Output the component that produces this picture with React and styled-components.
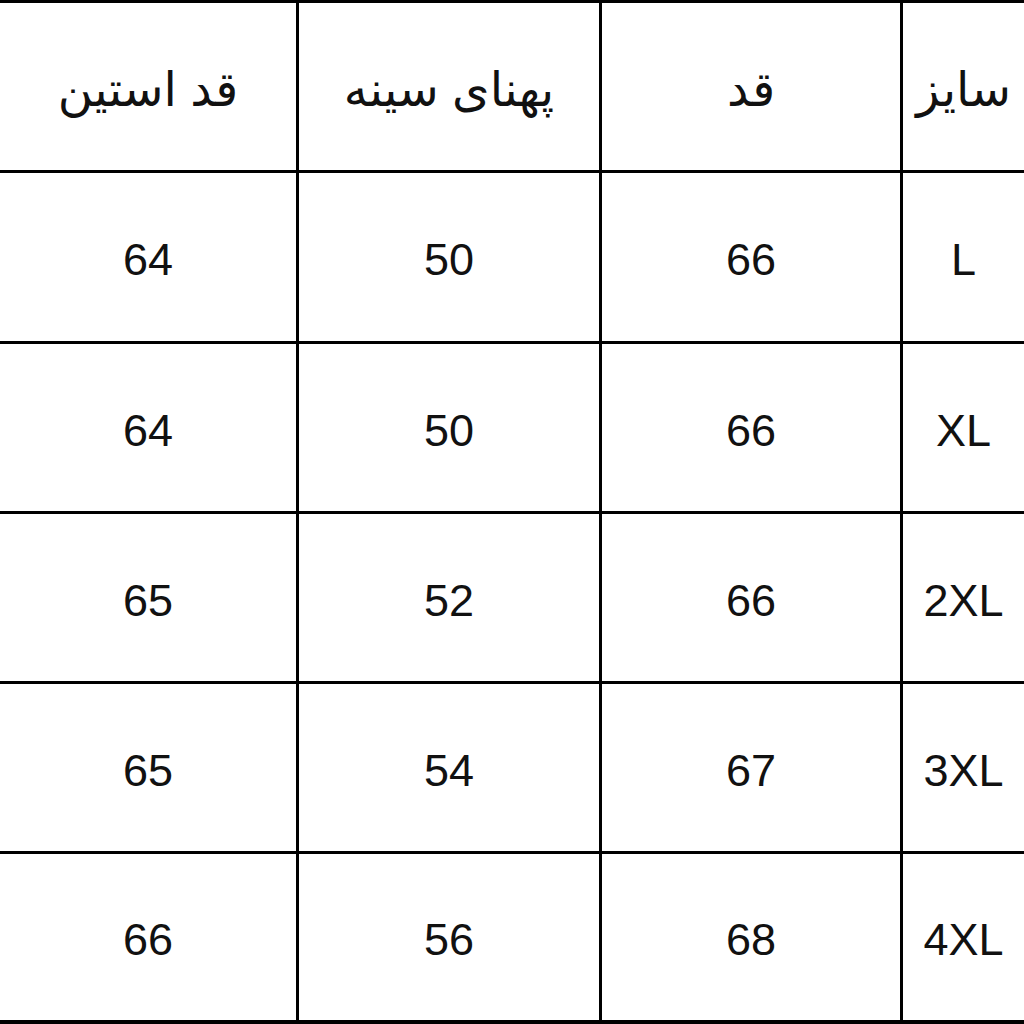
import React from "react";
import styled, { createGlobalStyle } from "styled-components";

const Global = createGlobalStyle`
  html, body { margin: 0; padding: 0; background: #ffffff; }
  body { width: 1024px; height: 1024px; overflow: hidden; }
`;

const Table = styled.div`
  direction: rtl;
  width: 1024px;
  height: 1024px;
  box-sizing: border-box;
  background: #000000;
  border-top: 3px solid #000000;
  border-bottom: 4px solid #000000;
  display: grid;
  grid-template-columns: 121px 298px 300px 296px;
  grid-template-rows: 167px 168px 167px 167px 167px 166px;
  column-gap: 3px;
  row-gap: 3px;
`;

const Cell = styled.div`
  background: #ffffff;
  display: flex;
  align-items: center;
  justify-content: center;
  color: #111111;
  font-family: "Liberation Sans", "DejaVu Sans", sans-serif;
  font-size: ${(p) => (p.$head ? "48px" : "45px")};
  padding-top: ${(p) => (p.$head ? "4px" : "6px")};
  box-sizing: border-box;
  white-space: nowrap;
`;

const headers = ["سایز", "قد", "پهنای سینه", "قد استین"];
const rows = [
  ["L", "66", "50", "64"],
  ["XL", "66", "50", "64"],
  ["2XL", "66", "52", "65"],
  ["3XL", "67", "54", "65"],
  ["4XL", "68", "56", "66"],
];

export default function App() {
  return (
    <>
      <Global />
      <Table>
        {headers.map((h) => (
          <Cell key={h} $head>
            {h}
          </Cell>
        ))}
        {rows.map((r, i) =>
          r.map((v, j) => <Cell key={`${i}-${j}`}>{v}</Cell>)
        )}
      </Table>
    </>
  );
}
